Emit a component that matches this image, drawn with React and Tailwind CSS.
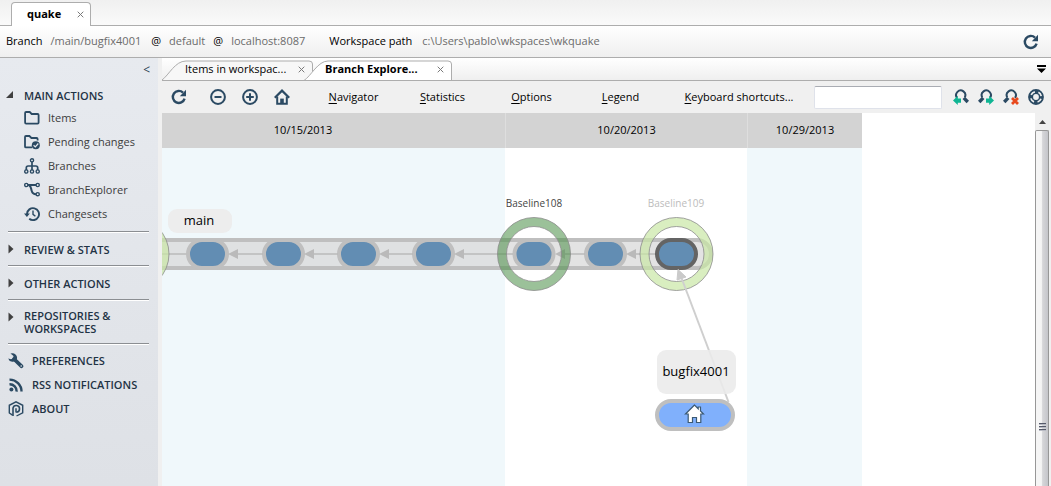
import React from "react";

const INK = "#2b4a63";

function Icon({ size = 16, children, box = 16 }) {
  return (
    <svg width={size} height={size} viewBox={`0 0 ${box} ${box}`} fill="none" stroke={INK} strokeWidth="2" aria-hidden="true" className="block shrink-0">
      {children}
    </svg>
  );
}

const RefreshIcon = () => (
  <Icon>
    <path d="M13.6 9.6A6 6 0 1 1 12 3.6" strokeWidth="2.4" />
    <path d="M15 .8v6.4H8.8z" fill={INK} stroke="none" />
  </Icon>
);
const ZoomOutIcon = () => (
  <Icon>
    <circle cx="8" cy="8" r="6.9" />
    <path d="M4.5 8h7" />
  </Icon>
);
const ZoomInIcon = () => (
  <Icon>
    <circle cx="8" cy="8" r="6.9" />
    <path d="M4.2 8h7.6M8 4.2v7.6" />
  </Icon>
);
const HomeIcon = () => (
  <Icon>
    <path d="M.8 8.8 8 1.6l7.2 7.2" strokeWidth="2.2" />
    <path d="M3.2 7.5v7.2h9.6V7.5" />
    <path d="M6.2 15V9.6h3.6V15z" fill={INK} stroke="none" />
  </Icon>
);
const FolderIcon = () => (
  <Icon>
    <path d="M1.1 3q0-1 1-1h3.6l2 2h5.9q1 0 1 1v7.6q0 1-1 1H2.1q-1 0-1-1z" strokeWidth="1.8" />
  </Icon>
);
const PendingIcon = () => (
  <Icon>
    <path d="M8.2 13.4H2q-1 0-1-1V3q0-1 1-1h3.4l2 2h5.2q1 0 1 1v1.6" strokeWidth="1.8" />
    <circle cx="11.8" cy="11.3" r="4" fill={INK} stroke="none" />
    <path d="m9.6 11.3 1.7 1.6 3-3.4" stroke="#e6e9ee" strokeWidth="1.2" />
  </Icon>
);
const BranchesIcon = () => (
  <Icon>
    <g strokeWidth="1.4">
      <circle cx="8" cy="2.3" r="1.6" />
      <circle cx="2.3" cy="13.5" r="1.6" />
      <circle cx="8" cy="13.5" r="1.6" />
      <circle cx="13.7" cy="13.5" r="1.6" />
    </g>
    <path d="M8 4v8M2.3 12V9.8q0-1.8 1.8-1.8h7.800q1.800 0 1.800 1.800V12" strokeWidth="1.7" />
  </Icon>
);
const ExplorerIcon = () => (
  <Icon>
    <g strokeWidth="1.4">
      <circle cx="2.300" cy="3" r="1.6" />
      <circle cx="13.700" cy="3" r="1.600" />
      <circle cx="13.700" cy="12.200" r="1.600" />
    </g>
    <path d="M4 3h8M5 3.200c2 .8 2 3 2.500 5s1.500 4 4.500 4" strokeWidth="2" />
  </Icon>
);
const ChangesetsIcon = () => (
  <Icon>
    <path d="M3 8a6 6 0 1 1 2.200 4.800" strokeWidth="1.900" />
    <path d="M0 7.600h5.800L2.900 11z" fill={INK} stroke="none" />
    <path d="M9 4.500V8.300l2.400 2" strokeWidth="1.400" />
  </Icon>
);
const WrenchIcon = () => (
  <Icon>
    <path d="m6 6 7.400 7.200" strokeWidth="3.800" strokeLinecap="round" />
    <path d="M2.500.6a4.700 4.700 0 0 1 6.300 5.800A4.700 4.700 0 0 1 .2 5.400L3 6.200 5.200 5.400 5.500 3z" fill={INK} stroke="none" />
    <circle cx="13.200" cy="13" r=".8" fill="#e3e6eb" stroke="none" />
  </Icon>
);
const RssIcon = () => (
  <Icon>
    <circle cx="3.400" cy="12.600" r="2" fill={INK} stroke="none" />
    <path d="M1.500 7.200a7 7 0 0 1 7.200 7.400M1.500 2.600a11.800 11.800 0 0 1 12 12" strokeWidth="2.400" />
  </Icon>
);
const AboutIcon = () => (
  <Icon>
    <path d="M4.500 14.200 1.300 12V4.300L8 .9l6.700 3.400v7.500L8.500 15" strokeWidth="1.400" />
    <path d="M5 15V7.200a3.300 3.300 0 1 1 3.300 3.900" strokeWidth="1.600" />
    <path d="M8 11.600V7.300" strokeWidth="1.500" />
  </Icon>
);

function Lens({ flip, children }) {
  return (
    <Icon>
      <g transform={flip ? "translate(16 0) scale(-1 1)" : undefined}>
        <path d="M4 8.800a4.600 4.600 0 1 1 7.800-.6" strokeWidth="2" />
        <path d="m10.800 8.800 4 4.200" strokeWidth="3.400" />
      </g>
      {children}
    </Icon>
  );
}
const FindPrevIcon = () => (
  <Lens>
    <path d="M0 11.600 4.800 6.800v2.700H8v4.200H4.800v2.300z" fill="#0fb593" stroke="none" />
  </Lens>
);
const FindNextIcon = () => (
  <Lens flip>
    <path d="M16 11.600 11.200 6.800v2.700H8v4.200h3.200v2.300z" fill="#0fb593" stroke="none" />
  </Lens>
);
const ClearFindIcon = () => (
  <Lens flip>
    <path d="m9 9 6 6M15 9l-6 6" stroke="#e8491d" strokeWidth="2.800" />
  </Lens>
);
const HelpIcon = () => (
  <Icon>
    <circle cx="8" cy="8" r="5.400" strokeWidth="5" />
    <circle cx="8" cy="8" r="5.300" stroke="#f0f0f0" strokeWidth="1.700" strokeDasharray="4.600 3.725" strokeDashoffset="-1.863" />
  </Icon>
);

function CloseGlyph() {
  return (
    <svg width="7" height="7" viewBox="0 0 7 7" stroke="#7a7a7a" strokeWidth="1" aria-hidden="true" className="block">
      <path d="m.7.7 5.600 5.600M6.300.7.7 6.300" />
    </svg>
  );
}

function DocTab({ label, active }) {
  return (
    <div className={`relative flex h-[22px] items-center ${active ? "z-10 -ml-[9px] w-[148px]" : "w-[151px]"}`}>
      <svg className="absolute inset-0 h-full w-full" viewBox={active ? "0 0 148 22" : "0 0 151 22"} preserveAspectRatio="none" aria-hidden="true">
        <path
          d={active ? "M0 22.500C7 18 14 3 24 3H144Q147.500 3 147.500 6V22.500" : "M0 22C7 17 13 3 24 3H147Q150.500 3 150.500 6V22"}
          fill={active ? "#ffffff" : "#f7f7f7"}
          stroke="#adadad"
        />
      </svg>
      <button type="button" role="tab" aria-selected={!!active} className={`relative flex-1 text-left text-[11px] leading-4 whitespace-nowrap ${active ? "pl-[21px] font-bold" : "pl-[23px]"}`}>
        {label}
      </button>
      <button type="button" aria-label="Close tab" className="relative mr-[7px] p-px">
        <CloseGlyph />
      </button>
    </div>
  );
}

function Rule() {
  return <div className="ml-2 h-0.5 w-[141px] border-t border-[#8b8e92] bg-white" />;
}

function Section({ label, open }) {
  return (
    <button type="button" aria-expanded={!!open} className="flex min-h-4 w-full items-center gap-2.5 pl-2 text-left text-[11px] leading-[13px] font-semibold text-[#1f3345]">
      <svg width="6" height="16" viewBox="0 0 6 16" fill="#404040" aria-hidden="true" className="block shrink-0 self-start overflow-visible">
        {open ? <path d="M5 4v7h-7z" /> : <path d="M.5 3.500 5.500 8l-5 4.500z" />}
      </svg>
      <span className="w-[110px]">{label}</span>
    </button>
  );
}

const ITEMS = [
  ["Items", FolderIcon],
  ["Pending changes", PendingIcon],
  ["Branches", BranchesIcon],
  ["BranchExplorer", ExplorerIcon],
  ["Changesets", ChangesetsIcon],
];
const FOOT = [
  ["PREFERENCES", WrenchIcon],
  ["RSS NOTIFICATIONS", RssIcon],
  ["ABOUT", AboutIcon],
];

function Sidebar() {
  return (
    <nav className="w-[158px] shrink-0 bg-linear-to-b from-[#e7eaef] to-[#dee1e6]">
      <div className="flex h-[29px] items-start justify-end pt-1 pr-2">
        <button type="button" aria-label="Collapse sidebar" className="text-xs leading-4 text-[#2b3f52]">&lt;</button>
      </div>
      <Section label="MAIN ACTIONS" open />
      <ul className="mt-[3px]">
        {ITEMS.map(([label, Glyph]) => (
          <li key={label}>
            <a href="#" className="flex h-6 items-center gap-2 pl-6 text-[11px] text-[#3c3c3c]">
              <Glyph />
              {label}
            </a>
          </li>
        ))}
      </ul>
      <div className="mt-[5px] flex flex-col gap-2">
        <Rule />
        <Section label="REVIEW & STATS" />
        <Rule />
        <Section label="OTHER ACTIONS" />
        <Rule />
        <Section label="REPOSITORIES & WORKSPACES" />
        <Rule />
      </div>
      <ul className="mt-1">
        {FOOT.map(([label, Glyph]) => (
          <li key={label}>
            <a href="#" className="flex h-6 items-center gap-2 pl-2 text-[11px] font-semibold text-[#1f3345]">
              <Glyph />
              {label}
            </a>
          </li>
        ))}
      </ul>
    </nav>
  );
}

function MenuButton({ label, wide }) {
  return (
    <button type="button" className={`shrink-0 text-center text-[11px] whitespace-nowrap ${wide ? "w-[148px]" : "w-[89px]"}`}>
      <span className="underline underline-offset-2">{label[0]}</span>
      {label.slice(1)}
    </button>
  );
}

function Toolbar() {
  return (
    <div className="flex h-8 items-center pl-[9px]">
      <button type="button" aria-label="Refresh"><RefreshIcon /></button>
      <div className="ml-[23px] flex gap-4">
        <button type="button" aria-label="Zoom out"><ZoomOutIcon /></button>
        <button type="button" aria-label="Zoom in"><ZoomInIcon /></button>
        <button type="button" aria-label="Home"><HomeIcon /></button>
      </div>
      <div className="ml-[19px] flex">
        <MenuButton label="Navigator" />
        <MenuButton label="Statistics" />
        <MenuButton label="Options" />
        <MenuButton label="Legend" />
        <MenuButton label="Keyboard shortcuts..." wide />
      </div>
      <div className="ml-auto flex items-center gap-[9px] pr-[7px]">
        <input type="search" aria-label="Find" className="mr-[2px] h-[23px] w-32 rounded-xs border border-[#dfe2ea] border-t-[#a9acb3] bg-white px-1 text-[11px]" />
        <button type="button" aria-label="Find previous"><FindPrevIcon /></button>
        <button type="button" aria-label="Find next"><FindNextIcon /></button>
        <button type="button" aria-label="Clear search"><ClearFindIcon /></button>
        <button type="button" aria-label="Help"><HelpIcon /></button>
      </div>
    </div>
  );
}

const NODES = [45.5, 121.5, 196.5, 271.5, 372, 443.5];

function Arrow({ tip, end }) {
  return (
    <g>
      <path d={`M${tip + 8} 141H${end}`} stroke="#bababa" strokeWidth="1.500" />
      <path d={`M${tip} 141l10-5v10z`} fill="#bababa" />
    </g>
  );
}

function Ring({ cx, fill, opacity }) {
  return (
    <g>
      <circle cx={cx} cy="141" r="32" fill="none" stroke={fill} strokeOpacity={opacity} strokeWidth="9" />
      <circle cx={cx} cy="141" r="36.500" fill="none" stroke="#8c8c8c" strokeOpacity=".8" />
      <circle cx={cx} cy="141" r="27.500" fill="none" stroke="#8c8c8c" strokeOpacity=".8" />
    </g>
  );
}

function Graph() {
  return (
    <svg className="absolute top-0 left-0 h-[373px] w-[700px]" viewBox="0 0 700 373" role="img" aria-label="Branch diagram">
      <rect x="-30" y="127" width="579" height="28" rx="14" fill="#d9d9d9" fillOpacity=".75" stroke="#bfbfbf" strokeWidth="4" />
      <path d="M0 141H26" stroke="#bababa" strokeWidth="1.500" />
      {NODES.map((x) => (
        <rect key={x} x={x - 19.5} y="127" width="39" height="28" rx="14" fill="#628db3" stroke="#bfbfbf" strokeWidth="4" />
      ))}
      <Arrow tip={66} end={101} />
      <Arrow tip={142} end={176} />
      <Arrow tip={217} end={251} />
      <Arrow tip={292} end={351} />
      <Arrow tip={393} end={423} />
      <Arrow tip={464} end={495} />
      <Ring cx={-29.5} fill="#c9e7a5" opacity=".7" />
      <Ring cx={372} fill="#498e46" opacity=".55" />
      <Ring cx={514.5} fill="#c9e7a5" opacity=".7" />
      <rect x="495" y="127" width="39" height="28" rx="14" fill="#628db3" stroke="#646464" strokeWidth="4" />
      <path d="M519.500 165 566.500 289" stroke="#cfcfcf" strokeWidth="2" />
      <path d="M516 156.500l8 7.500-9 3z" fill="#cacaca" stroke="#cacaca" />
      <rect x="495" y="237" width="79" height="44" rx="9" fill="#ebebeb" fillOpacity=".88" />
      <rect x="495" y="288" width="76" height="28" rx="14" fill="#80b0fc" stroke="#bfbfbf" strokeWidth="4" />
      <path d="M532.500 292 523.500 301h2.700v8.500h4.300v-5h4v5h4.300V301h2.700l-3-3v-4h-2.300v1.700z" fill="#fff" stroke="#3c5a73" strokeWidth="1.200" />
      <rect x="6" y="96" width="64" height="24" rx="9" fill="#ececec" fillOpacity=".95" />
      <g textAnchor="middle" className="text-[13px]">
        <text x="37" y="112">main</text>
        <text x="534" y="263">bugfix4001</text>
      </g>
      <g textAnchor="middle" className="text-[10px]">
        <text x="372" y="94" fill="#444">Baseline108</text>
        <text x="514" y="94" fill="#bcbcbc">Baseline109</text>
      </g>
    </svg>
  );
}

const DATES = [
  ["10/15/2013", "w-[343px] pr-[61px]", "bg-[#f0f8fb]"],
  ["10/20/2013", "w-[242px] border-l border-[#dedede]", "bg-white"],
  ["10/29/2013", "w-[115px] border-l border-[#dedede]", "bg-[#f0f8fb]"],
];

function Canvas() {
  return (
    <div className="relative flex min-w-0 flex-1 overflow-hidden bg-white">
      {DATES.map(([date, head, body]) => (
        <div key={date} className="flex shrink-0 flex-col">
          <div className={`flex h-[35px] items-center justify-center bg-[#d3d3d3] text-[11px] ${head}`}>{date}</div>
          <div className={`flex-1 ${body}`} />
        </div>
      ))}
      <Graph />
    </div>
  );
}

function Scrollbar() {
  return (
    <div className="mr-[2px] flex w-[14px] flex-col bg-[#f0f0f0]" aria-hidden="true">
      <div className="flex h-[17px] items-center justify-center">
        <svg width="7" height="4" viewBox="0 0 7 4" fill="#444"><path d="M3.500 0 7 4H0z" /></svg>
      </div>
      <div className="flex flex-1 flex-col items-center rounded-t-xs border border-b-0 border-[#979797] bg-linear-to-r from-[#f5f5f5] from-45% via-[#d6d6d9] via-55% to-[#c4c5ca] pt-[292px]">
        <div className="flex w-[7px] flex-col gap-px">
          <i className="h-0.5 border-t border-[#555a6a] bg-[#b9bbc4]" />
          <i className="h-0.5 border-t border-[#555a6a] bg-[#b9bbc4]" />
          <i className="h-0.5 border-t border-[#555a6a] bg-[#b9bbc4]" />
        </div>
      </div>
    </div>
  );
}

export default function App() {
  return (
    <div className="flex h-screen min-h-[480px] flex-col overflow-hidden bg-[#f0f0f0] font-['Open_Sans','Noto_Sans',sans-serif] text-black">
      <header className="flex h-[26px] items-end border-b border-[#adadad] bg-linear-to-b from-[#f0f0f0] to-[#fafafa] pl-[11px]">
        <div className="-mb-px flex h-6 w-20 items-center justify-between rounded-t-sm border border-b-0 border-[#adadad] bg-white pr-1.5 pl-[15px]">
          <button type="button" className="text-[11px] font-bold">quake</button>
          <button type="button" aria-label="Close workspace"><CloseGlyph /></button>
        </div>
      </header>
      <div className="flex h-8 items-center border-b border-[#adadad] bg-linear-to-b from-white to-[#efefef] pr-3 pl-1.5 text-[11px] whitespace-nowrap text-[#6b6b6b]">
        <span className="text-black">Branch</span>
        <span className="ml-2">/main/bugfix4001</span>
        <span className="ml-2.5 text-black">@</span>
        <span className="ml-2">default</span>
        <span className="ml-2 text-black">@</span>
        <span className="ml-2">localhost:8087</span>
        <span className="ml-6 text-black">Workspace path</span>
        <span className="ml-2.5">c:\Users\pablo\wkspaces\wkquake</span>
        <button type="button" aria-label="Refresh workspace" className="ml-auto"><RefreshIcon /></button>
      </div>
      <div className="flex min-h-0 flex-1">
        <Sidebar />
        <main className="flex min-w-0 flex-1 flex-col pl-1">
          <div role="tablist" className="flex h-[23px] border-b border-[#adadad] bg-linear-to-b from-white to-[#efefef]">
            <DocTab label="Items in workspac..." />
            <DocTab label="Branch Explore..." active />
            <button type="button" aria-label="Tab list" className="mr-[5px] ml-auto">
              <svg width="9" height="8" viewBox="0 0 9 8" className="block"><path d="M0 0h9v2H0zM0 3.500h9L4.500 8z" /></svg>
            </button>
          </div>
          <Toolbar />
          <div className="flex min-h-0 flex-1">
            <Canvas />
            <Scrollbar />
          </div>
        </main>
      </div>
    </div>
  );
}
